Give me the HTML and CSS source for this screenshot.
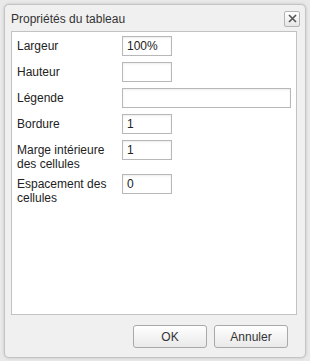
FILE: index.html
```html
<!DOCTYPE html>
<html lang="fr">
<head>
<meta charset="utf-8">
<title>Propriétés du tableau</title>
<link rel="stylesheet" href="styles.css">
</head>
<body>
<div class="dialog">
  <div class="titlebar">
    <span class="title">Propriétés du tableau</span>
    <button class="close" aria-label="Fermer">
      <svg width="9" height="9" viewBox="0 0 9 9"><path d="M1 1L8 8M8 1L1 8" stroke="#555" stroke-width="1.6" fill="none"/></svg>
    </button>
  </div>
  <div class="panel">
    <div class="form">
      <label class="lbl">Largeur</label><input class="inp" value="100%">
      <label class="lbl">Hauteur</label><input class="inp" value="">
      <label class="lbl">Légende</label><input class="inp wide" value="">
      <label class="lbl">Bordure</label><input class="inp" value="1">
      <label class="lbl">Marge intérieure des cellules</label><input class="inp" value="1">
      <label class="lbl">Espacement des cellules</label><input class="inp" value="0">
    </div>
  </div>
  <div class="footer">
    <button class="btn">OK</button>
    <button class="btn">Annuler</button>
  </div>
</div>
</body>
</html>
```
FILE: styles.css
```css
html, body {
  margin: 0;
  padding: 0;
  background: #e9e9e9;
  width: 310px;
  height: 361px;
  overflow: hidden;
  font-family: "Liberation Sans", Arial, sans-serif;
  font-size: 12px;
  color: #222;
}
.dialog {
  box-sizing: border-box;
  margin: 4px 0 0 4px;
  width: 302px;
  height: 354px;
  background: #f0f0f0;
  border: 1px solid #c4c4c4;
  border-radius: 5px;
  box-shadow: 0 0 3px rgba(0,0,0,0.18);
  display: flex;
  flex-direction: column;
}
.titlebar {
  height: 26px;
  display: flex;
  align-items: center;
  justify-content: space-between;
  padding: 0 5px 0 6px;
}
.title {
  font-size: 12px;
  color: #333;
  padding-top: 1px;
}
.close {
  box-sizing: border-box;
  width: 16px;
  height: 16px;
  padding: 0;
  margin-top: 1px;
  border: 1px solid #b4b4b4;
  border-radius: 2px;
  background: linear-gradient(#ffffff, #e6e6e6);
  display: flex;
  align-items: center;
  justify-content: center;
}
.panel {
  box-sizing: border-box;
  margin: 0 0 0 6px;
  width: 286px;
  height: 284px;
  background: #fff;
  border: 1px solid #c2c2c2;
  padding: 4px 0 0 5px;
}
.form {
  display: grid;
  grid-template-columns: 105px auto;
  row-gap: 6px;
  align-items: start;
}
.lbl {
  padding-top: 3px;
  margin-bottom: -3px;
  line-height: 14px;
  width: 100px;
  color: #222;
}
.inp {
  box-sizing: border-box;
  width: 50px;
  height: 20px;
  border: 1px solid #b8b8b8;
  border-radius: 0;
  box-shadow: inset 0 1px 2px rgba(0,0,0,0.08);
  padding: 2px 4px;
  font-family: "Liberation Sans", Arial, sans-serif;
  font-size: 12px;
  color: #222;
  background: #fff;
}
.inp.wide {
  width: 169px;
}
.footer {
  display: flex;
  justify-content: flex-end;
  gap: 7px;
  padding: 10px 17px 0 0;
}
.btn {
  box-sizing: border-box;
  width: 74px;
  height: 23px;
  border: 1px solid #a9a9a9;
  border-radius: 3px;
  background: linear-gradient(#ffffff, #e9e9e9);
  font-family: "Liberation Sans", Arial, sans-serif;
  font-size: 12px;
  color: #333;
  padding: 0;
}
```
